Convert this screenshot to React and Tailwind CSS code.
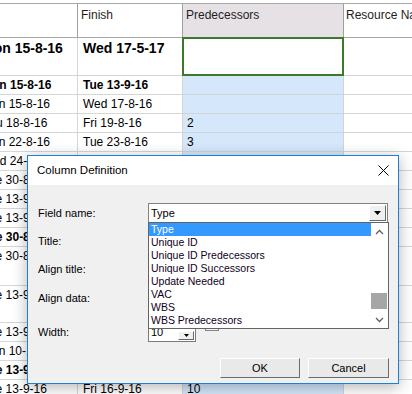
const rows = [
  { h: "h-[38px]", start: "Mon 15-8-16", finish: "Wed 17-5-17", pred: "", big: true, sel: true },
  { h: "h-[19px]", start: "Mon 15-8-16", finish: "Tue 13-9-16", pred: "", bold: true },
  { h: "h-[19px]", start: "Mon 15-8-16", finish: "Wed 17-8-16", pred: "" },
  { h: "h-[19px]", start: "Thu 18-8-16", finish: "Fri 19-8-16", pred: "2" },
  { h: "h-[19px]", start: "Mon 22-8-16", finish: "Tue 23-8-16", pred: "3" },
  { h: "h-[19px]", start: "Wed 24-8-16", finish: "Tue 30-8-16", pred: "4" },
  { h: "h-[19px]", start: "Tue 30-8-16", finish: "Tue 30-8-16", pred: "5" },
  { h: "h-[19px]", start: "Tue 13-9-16", finish: "Tue 13-9-16", pred: "6" },
  { h: "h-[19px]", start: "Tue 13-9-16", finish: "Tue 13-9-16", pred: "" },
  { h: "h-[19px]", start: "Tue 30-8-16", finish: "Tue 13-9-16", pred: "", bold: true },
  { h: "h-[39px]", start: "Tue 30-8-16", finish: "Tue 13-9-16", pred: "7" },
  { h: "h-[37px]", start: "Tue 13-9-16", finish: "Tue 13-9-16", pred: "9" },
  { h: "h-[19px]", start: "Tue 13-9-16", finish: "Tue 13-9-16", pred: "" },
  { h: "h-[19px]", start: "Mon 10-10-16", finish: "Mon 10-10-16", pred: "" },
  { h: "h-[19px]", start: "Tue 13-9-16", finish: "Fri 16-9-16", pred: "", bold: true },
  { h: "h-[19px]", start: "Tue 13-9-16", finish: "Fri 16-9-16", pred: "10" },
];

const fields = [
  "Type",
  "Unique ID",
  "Unique ID Predecessors",
  "Unique ID Successors",
  "Update Needed",
  "VAC",
  "WBS",
  "WBS Predecessors",
];

function Row({ h, start, finish, pred, bold, big, sel }) {
  const txt = big
    ? "text-[14px] font-bold leading-[17px]"
    : bold
      ? "text-[12px] font-bold leading-[15px]"
      : "text-[12px] leading-[15px]";
  return (
    <div className={`flex ${h} ${txt}`}>
      <div className="w-[101px] shrink-0 border-r border-b border-[#d6d6d6] pl-[5px] pt-[2px] whitespace-nowrap overflow-hidden">
        {start}
      </div>
      <div className="w-[105px] shrink-0 border-r border-b border-[#d6d6d6] pl-[5px] pt-[2px] whitespace-nowrap overflow-hidden">
        {finish}
      </div>
      <div
        className={`relative w-[161px] shrink-0 border-r border-b border-[#d0d4d9] pl-[4px] pt-[2px] ${sel ? "bg-white" : "bg-[#d5e7fb]"}`}
      >
        {pred}
        {sel && <div className="absolute -left-px -top-px -right-px -bottom-px border-2 border-[#3c7a2b]" />}
      </div>
      <div className="w-[80px] shrink-0 border-b border-[#d6d6d6]" />
    </div>
  );
}

function Chevron({ up }) {
  return (
    <svg width="9" height="6" viewBox="0 0 9 6">
      <polyline
        points={up ? "1,5 4.5,1.5 8,5" : "1,1 4.5,4.5 8,1"}
        fill="none"
        stroke="#5f5f5f"
        strokeWidth="1.3"
      />
    </svg>
  );
}

function DownTri() {
  return (
    <svg width="7" height="4" viewBox="0 0 7 4">
      <polygon points="0,0 7,0 3.5,4" fill="#000" />
    </svg>
  );
}

function Dialog() {
  return (
    <div className="absolute left-[27px] top-[155px] w-[372px] h-[229px] border border-[#1c80d6] bg-[#f0f0f0] flex flex-col shadow-[0_3px_14px_rgba(0,0,0,0.3)] font-['Liberation_Sans',sans-serif] text-black">
      <div className="h-[29px] bg-white flex items-center justify-between pl-[9px] pr-[9px]">
        <span className="text-[11.5px]">Column Definition</span>
        <svg width="11" height="11" viewBox="0 0 11 11">
          <path d="M0.5 0.5 L10.5 10.5 M10.5 0.5 L0.5 10.5" stroke="#000" strokeWidth="1" />
        </svg>
      </div>

      <div className="flex flex-col pl-[10px] pt-[18px] text-[11px]">
        <div className="flex items-center h-[20px]">
          <span className="w-[110px]">Field name:</span>
          <div className="relative w-[240px] h-[20px]">
            <div className="w-full h-full bg-white border border-[#828282] flex items-center pl-[2px] pr-[1px]">
              <span>Type</span>
              <div className="ml-auto w-[17px] h-[16px] bg-[#f0f0f0] border border-t-white border-l-white border-r-[#696969] border-b-[#696969] flex items-center justify-center">
                <DownTri />
              </div>
            </div>
            <div className="absolute left-0 top-[19px] z-10 w-[241px] h-[107px] bg-white border border-[#646464] flex text-[10.5px]">
              <div className="w-[222px] flex flex-col">
                {fields.map((f, i) => (
                  <div
                    key={f}
                    className={`h-[13px] leading-[13px] pl-[2px] whitespace-nowrap ${i === 0 ? "bg-[#3399ff] text-white" : "text-[#10001c]"}`}
                  >
                    {f}
                  </div>
                ))}
              </div>
              <div className="w-[16px] flex flex-col bg-white">
                <div className="h-[17px] flex items-center justify-center">
                  <Chevron up />
                </div>
                <div className="flex-1">
                  <div className="mt-[53px] h-[16px] bg-[#a6a6a6]" />
                </div>
                <div className="h-[17px] flex items-center justify-center">
                  <Chevron />
                </div>
              </div>
            </div>
          </div>
        </div>
        <div className="flex items-center h-[20px] mt-[8px]">
          <span className="w-[110px]">Title:</span>
        </div>
        <div className="flex items-center h-[20px] mt-[8px]">
          <span className="w-[110px]">Align title:</span>
        </div>
        <div className="flex items-center h-[20px] mt-[9px]">
          <span className="w-[110px]">Align data:</span>
        </div>
        <div className="flex items-center h-[20px] mt-[14px]">
          <span className="w-[110px]">Width:</span>
          <div className="w-[48px] h-[20px] bg-white border border-[#7a7a7a] flex items-center pl-[2px]">
            <span>10</span>
            <div className="ml-auto self-end mb-[1px] mr-[1px] w-[16px] h-[9px] bg-[#f0f0f0] border border-t-white border-l-white border-r-[#696969] border-b-[#696969] flex items-center justify-center">
              <svg width="5" height="3" viewBox="0 0 5 3">
                <polygon points="0,0 5,0 2.5,3" fill="#000" />
              </svg>
            </div>
          </div>
          <div className="self-start ml-[9px] w-[14px] h-[9px] border border-[#8a8a8a]" />
        </div>
      </div>

      <div className="mt-auto flex justify-end gap-[8px] pr-[9px] pb-[5px] text-[11px]">
        <button className="w-[80px] h-[20px] bg-[#e9e9e9] border border-t-white border-l-white border-r-[#6b6b6b] border-b-[#6b6b6b]">
          OK
        </button>
        <button className="w-[81px] h-[20px] bg-[#e9e9e9] border border-t-white border-l-white border-r-[#6b6b6b] border-b-[#6b6b6b]">
          Cancel
        </button>
      </div>
    </div>
  );
}

export default function App() {
  return (
    <div className="relative w-[412px] h-[394px] overflow-hidden bg-white font-['Liberation_Sans',sans-serif] text-black">
      <div className="pt-[3px] -ml-[23px] w-[460px]">
        <div className="flex h-[35px] border-t border-b border-[#a9a9a9] text-[12px] leading-[15px] text-[#1e1e1e]">
          <div className="w-[101px] shrink-0 border-r border-[#a0a0a0]" />
          <div className="w-[105px] shrink-0 border-r border-[#a0a0a0] pl-[3px] pt-[4px]">Finish</div>
          <div className="w-[161px] shrink-0 border-r border-[#a0a0a0] bg-[#e6e1e5] pl-[3px] pt-[4px]">
            Predecessors
          </div>
          <div className="w-[80px] shrink-0 pl-[2px] pt-[4px] whitespace-nowrap">Resource Names</div>
        </div>
        {rows.map((r, i) => (
          <Row key={i} {...r} />
        ))}
      </div>
      <Dialog />
    </div>
  );
}
